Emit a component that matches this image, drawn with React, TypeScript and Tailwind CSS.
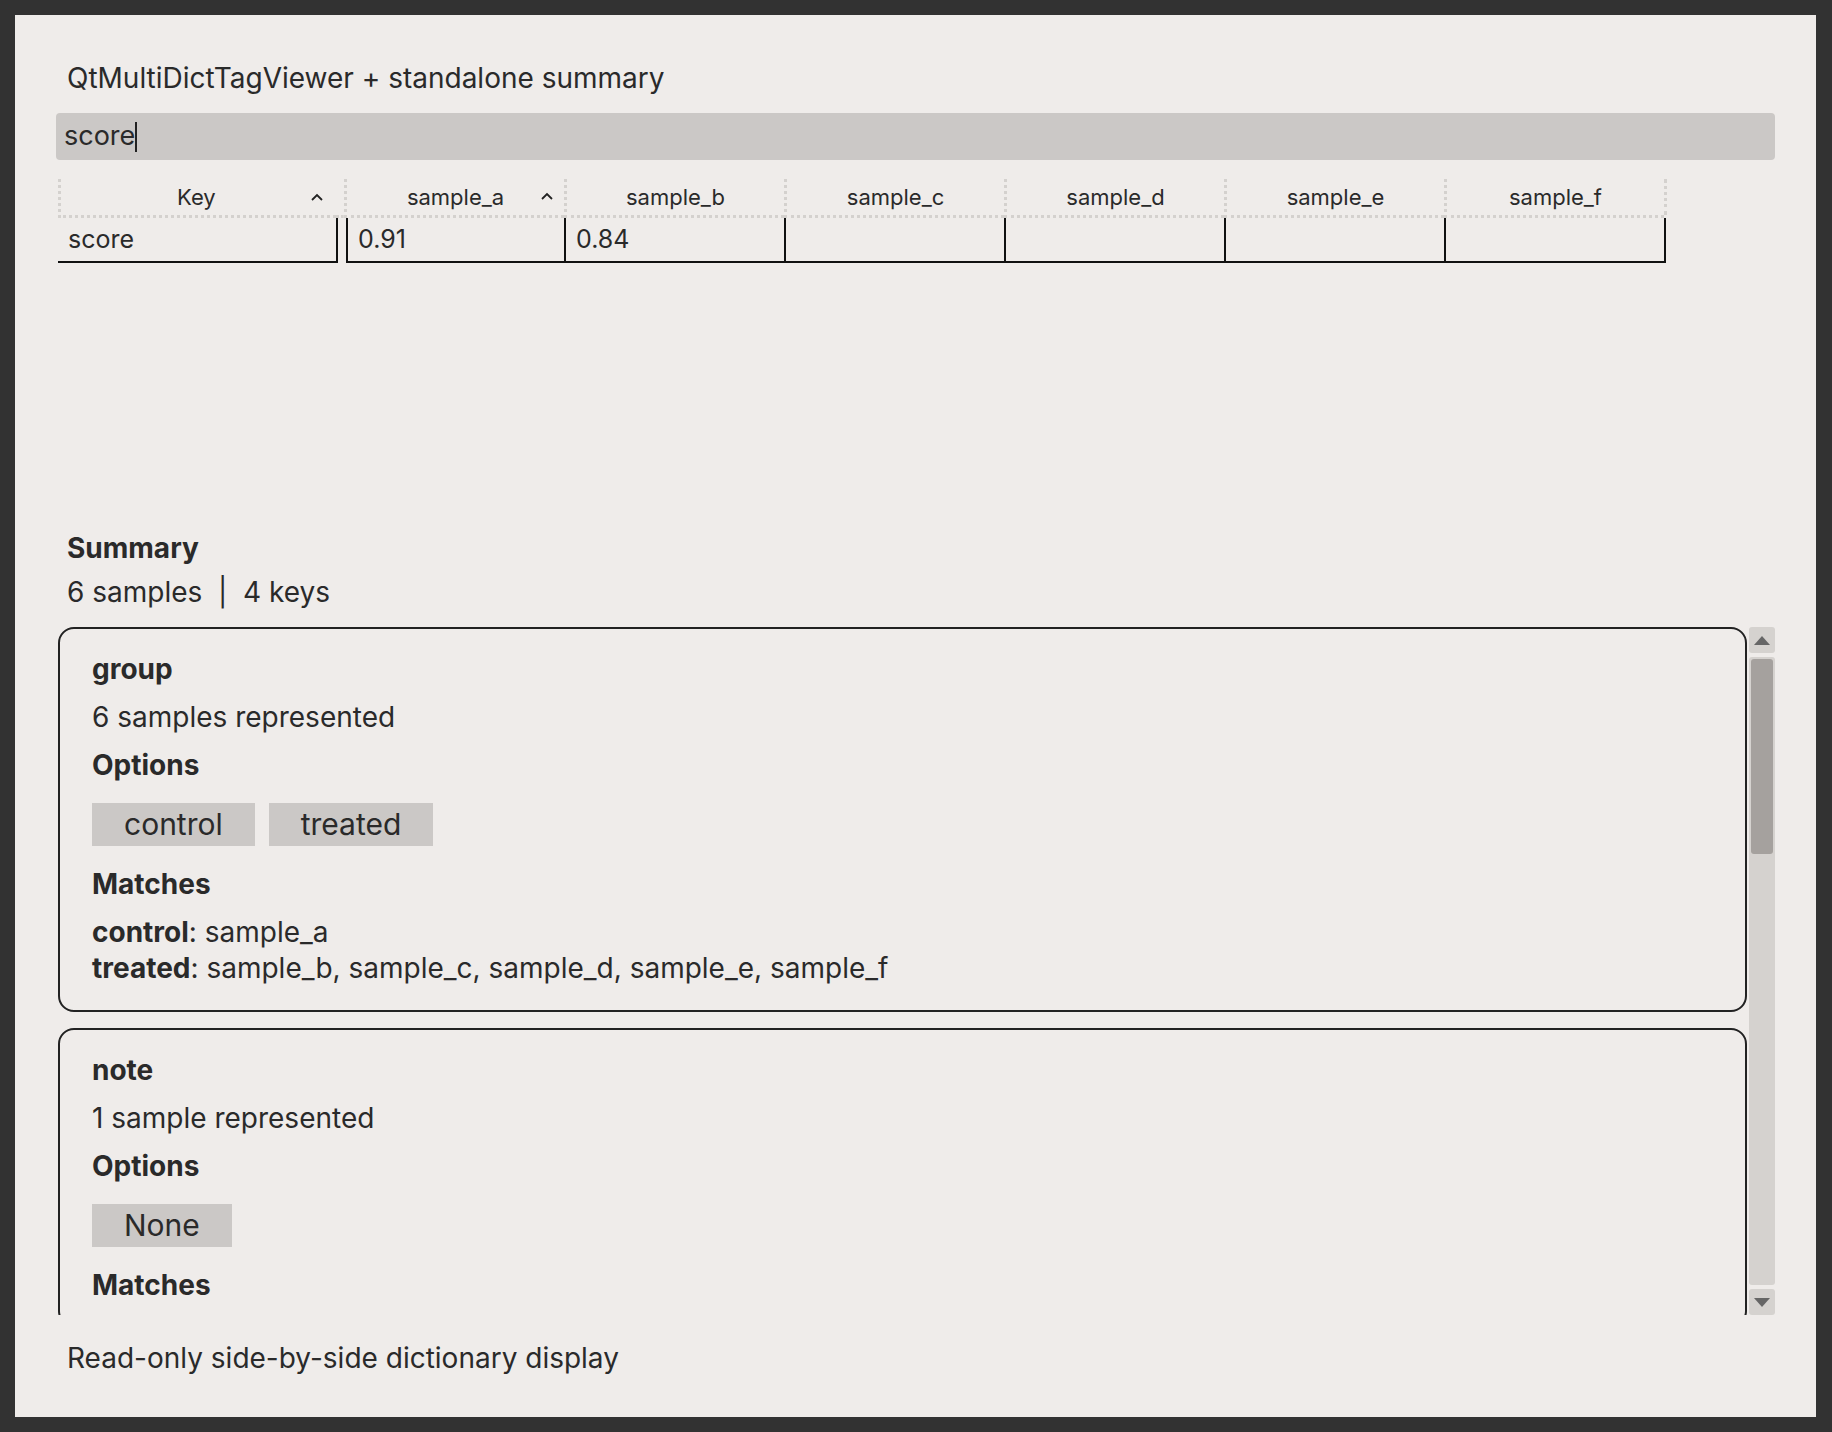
import React from "react";

const cols = ["sample_a", "sample_b", "sample_c", "sample_d", "sample_e", "sample_f"];

function Caret() {
  return (
    <svg width="14" height="10" viewBox="0 0 14 10" className="ml-auto">
      <path d="M2 8 L7 3 L12 8" fill="none" stroke="#222" strokeWidth="1.8" />
    </svg>
  );
}

function Card({ title, rep, options, matches }: { title: string; rep: string; options: string[]; matches?: React.ReactNode }) {
  return (
    <div className="border-2 border-[#222] rounded-[16px] pl-[32px] pt-[24px] pb-[24px] flex flex-col text-[28px] text-[#2a2a2a] shrink-0">
      <div className="font-bold leading-[32px]">{title}</div>
      <div className="mt-[16px] leading-[32px]">{rep}</div>
      <div className="mt-[16px] font-bold leading-[32px]">Options</div>
      <div className="mt-[22px] flex gap-[14px]">
        {options.map((o) => (
          <div key={o} className="bg-[#cbc8c6] h-[43px] px-[32px] flex items-center text-[30px]">{o}</div>
        ))}
      </div>
      <div className="mt-[22px] font-bold leading-[32px]">Matches</div>
      {matches && <div className="mt-[14px] leading-[36px]">{matches}</div>}
    </div>
  );
}

export default function App() {
  return (
    <div className="w-[1832px] h-[1432px] bg-[#323232] p-[15px] pr-[16px]" style={{ fontFamily: "Inter, 'Liberation Sans', sans-serif" }}>
      <div className="w-full h-full bg-[#efecea] flex flex-col px-[41px] text-[#2a2a2a]">
        <div className="mt-[46px] ml-[11px] text-[28px] leading-[34px]">QtMultiDictTagViewer + standalone summary</div>
        <div className="mt-[18px] h-[47px] bg-[#cbc8c6] rounded-[4px] flex items-center px-[8px] text-[27px]">
          score<span className="inline-block w-[2px] h-[30px] bg-[#222]" />
        </div>
        <div className="mt-[19px] ml-[2px] flex flex-col text-[22px]">
          <div className="flex h-[39px]">
            <div className="w-[278px] flex items-center pl-[116px] pr-[12px] border-l-[3px] border-dotted border-b-[3px] border-[#d4d1ce]">Key<Caret /></div>
            <div className="w-[8px] border-b-[3px] border-dotted border-[#d4d1ce]" />
            {cols.map((c, i) => (
              <div key={c} className="w-[220px] flex items-center justify-center border-l-[3px] border-dotted border-b-[3px] border-[#d4d1ce] relative pr-[12px]">
                <span className="ml-[12px]">{c}</span>
                {i === 0 && <span className="absolute right-[10px] top-[12px]"><Caret /></span>}
                {i === 5 && <span className="absolute right-[-3px] top-0 h-full border-r-[3px] border-dotted border-[#d4d1ce]" />}
              </div>
            ))}
          </div>
          <div className="flex h-[45px] text-[25px]">
            <div className="w-[280px] border-b-2 border-r-2 border-[#111] flex items-center pl-[10px]">score</div>
            <div className="w-[8px]" />
            {cols.map((c, i) => (
              <div key={c} className={`w-[220px] border-b-2 border-[#111] flex items-center pl-[10px] ${i === 0 ? "border-l-2" : ""} border-r-2`}>
                {i === 0 ? "0.91" : i === 1 ? "0.84" : ""}
              </div>
            ))}
          </div>
        </div>
        <div className="mt-[268px] ml-[11px] font-bold text-[28px] leading-[34px]">Summary</div>
        <div className="mt-[10px] ml-[11px] text-[28px] leading-[34px]">6 samples &nbsp;|&nbsp; 4 keys</div>
        <div className="mt-[18px] ml-[2px] h-[688px] flex gap-[2px] overflow-hidden">
          <div className="flex-1 flex flex-col gap-[16px] overflow-hidden">
            <Card
              title="group"
              rep="6 samples represented"
              options={["control", "treated"]}
              matches={<><div><b>control</b>: sample_a</div><div><b>treated</b>: sample_b, sample_c, sample_d, sample_e, sample_f</div></>}
            />
            <Card title="note" rep="1 sample represented" options={["None"]} />
          </div>
          <div className="w-[26px] flex flex-col gap-[4px]">
            <div className="h-[26px] bg-[#d5d2cf] rounded-[3px] flex items-center justify-center">
              <svg width="16" height="9" viewBox="0 0 16 9"><path d="M0 9 L8 0 L16 9Z" fill="#666" /></svg>
            </div>
            <div className="flex-1 bg-[#d5d2cf] rounded-[3px] p-[2px]">
              <div className="h-[195px] bg-[#a5a19e] rounded-[3px]" />
            </div>
            <div className="h-[26px] bg-[#d5d2cf] rounded-[3px] flex items-center justify-center">
              <svg width="16" height="9" viewBox="0 0 16 9"><path d="M0 0 L8 9 L16 0Z" fill="#666" /></svg>
            </div>
          </div>
        </div>
        <div className="mt-[26px] ml-[11px] text-[28px] leading-[34px]">Read-only side-by-side dictionary display</div>
      </div>
    </div>
  );
}
